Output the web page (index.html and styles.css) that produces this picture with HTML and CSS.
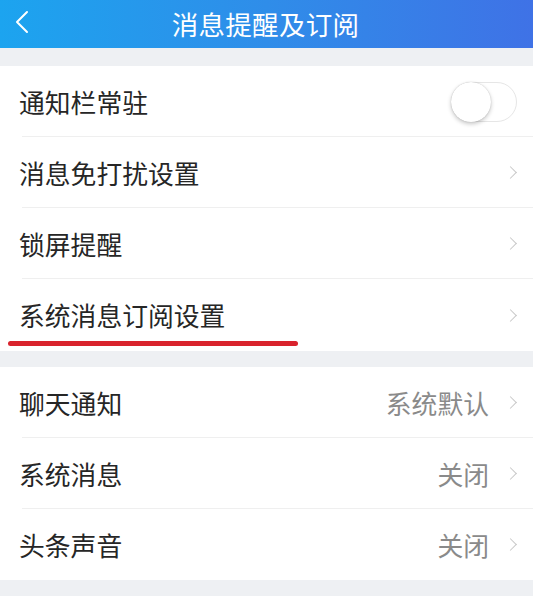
FILE: index.html
```html
<!DOCTYPE html>
<html lang="zh">
<head>
<meta charset="utf-8">
<link rel="stylesheet" href="styles.css">
</head>
<body>
<div class="page">
  <header class="topbar">
    <svg class="back" width="14" height="24" viewBox="0 0 14 24"><path d="M12 2 L2 12 L12 22" fill="none" stroke="#fff" stroke-width="2" stroke-linecap="round" stroke-linejoin="round"/></svg>
    <div class="title">消息提醒及订阅</div>
  </header>
  <section class="group first">
    <div class="row">
      <span class="label">通知栏常驻</span>
      <span class="toggle"><span class="knob"></span></span>
    </div>
    <div class="row">
      <span class="label">消息免打扰设置</span>
      <span class="chev"></span>
    </div>
    <div class="row">
      <span class="label">锁屏提醒</span>
      <span class="chev"></span>
    </div>
    <div class="row last highlighted">
      <span class="label">系统消息订阅设置</span>
      <span class="chev"></span>
      <span class="mark"></span>
    </div>
  </section>
  <section class="group">
    <div class="row">
      <span class="label">聊天通知</span>
      <span class="value">系统默认</span>
      <span class="chev"></span>
    </div>
    <div class="row">
      <span class="label">系统消息</span>
      <span class="value">关闭</span>
      <span class="chev"></span>
    </div>
    <div class="row last">
      <span class="label">头条声音</span>
      <span class="value">关闭</span>
      <span class="chev"></span>
    </div>
  </section>
</div>
</body>
</html>
```

FILE: styles.css
```css
html, body {
  margin: 0;
  padding: 0;
  background: #eef0f3;
}
body {
  font-family: "Noto Sans CJK SC", "Noto Sans", sans-serif;
}
.page {
  width: 533px;
  height: 596px;
  overflow: hidden;
}
.topbar {
  height: 48px;
  background: linear-gradient(90deg, #1ca4ef 0%, #2f8de9 50%, #3f72e6 100%);
  display: flex;
  align-items: center;
  justify-content: center;
  position: relative;
}
.back {
  position: absolute;
  left: 15px;
  top: 10px;
}
.title {
  color: #fff;
  font-size: 26.5px;
  letter-spacing: 0.3px;
  line-height: 1;
  margin-left: -2px;
}
.group {
  background: #fff;
  margin-top: 18px;
}
.group + .group {
  margin-top: 16px;
}
.row {
  height: 71px;
  display: flex;
  align-items: center;
  padding-left: 19px;
  padding-right: 14px;
  position: relative;
}
.row::after {
  content: "";
  position: absolute;
  left: 22px;
  right: 0;
  bottom: 0;
  height: 1px;
  background: #efefef;
}
.row.last::after {
  display: none;
}
.label {
  font-size: 25.8px;
  color: #262626;
  flex: 1;
  line-height: 1;
}
.value {
  font-size: 25.8px;
  color: #8a8a8a;
  margin-right: 17px;
  line-height: 1;
}
.chev {
  width: 8px;
  height: 8px;
  border-top: 1.5px solid #c8c8c8;
  border-right: 1.5px solid #c8c8c8;
  transform: rotate(45deg);
  margin-right: 4px;
}
.toggle {
  width: 66px;
  height: 40px;
  border-radius: 20px;
  border: 1px solid #e6e6e6;
  background: #fff;
  position: relative;
  box-sizing: border-box;
  margin-right: 2px;
}
.knob {
  position: absolute;
  left: -1px;
  top: -1px;
  width: 40px;
  height: 40px;
  border-radius: 50%;
  background: #fff;
  box-shadow: 0 2px 4px rgba(0,0,0,0.22), 0 0 1px rgba(0,0,0,0.25);
}
.mark {
  position: absolute;
  left: 8px;
  top: 62px;
  width: 290px;
  height: 5px;
  border-radius: 3px;
  background: #d9232d;
}
.highlighted {
  height: 72px;
}
```
